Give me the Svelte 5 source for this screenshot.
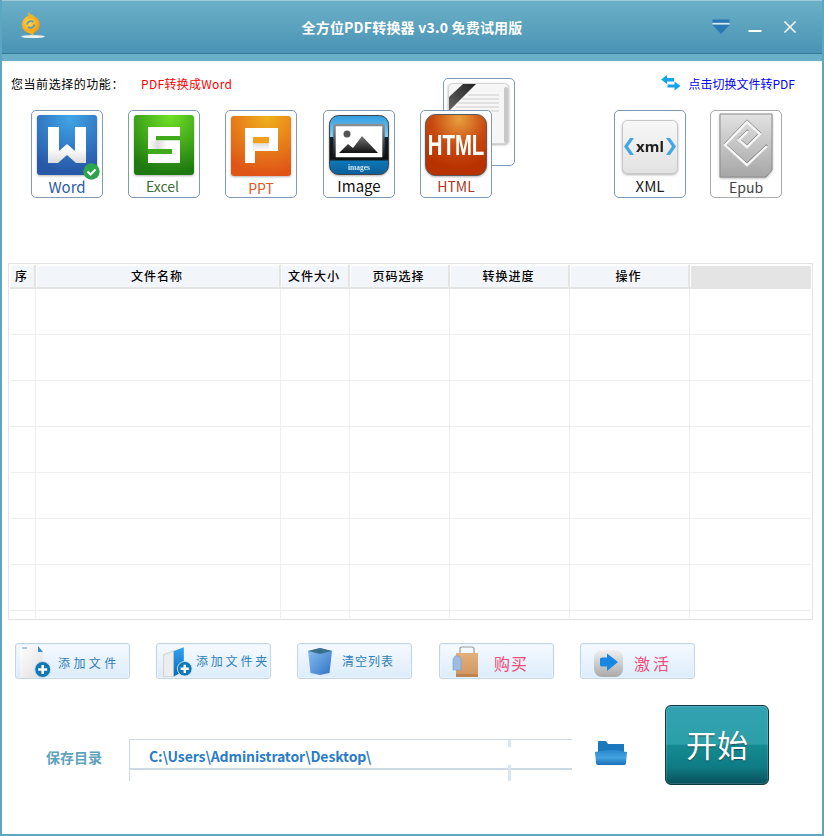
<script lang="ts">
	const columns = ['序', '文件名称', '文件大小', '页码选择', '转换进度', '操作', '']
	const rows = Array.from({ length: 8 })
</script>

<div class="window">
	<header class="titlebar">
		<svg class="logo" width="30" height="30" viewBox="0 0 30 30">
			<defs>
				<radialGradient id="logoFill" cx="0.4" cy="0.4" r="0.65">
					<stop offset="0" stop-color="#ffd84a" />
					<stop offset="1" stop-color="#f2960f" />
				</radialGradient>
			</defs>
			<ellipse cx="15" cy="25.6" rx="12" ry="1.5" fill="#e8f2f0" />
			<circle cx="12.8" cy="13.5" r="9" fill="url(#logoFill)" />
			<path d="M10 1.5 L16 5 L11 8z M15.5 25 L10 21 L15.5 18.5z" fill="#f6b21e" />
			<path d="M9 13.5 a4 4 0 0 1 6.5 -2.5 M16.5 13.5 a4 4 0 0 1 -6.5 2.5" fill="none" stroke="#5f9cb8" stroke-width="1.8" />
		</svg>
		<h1>全方位PDF转换器 v3.0 免费试用版</h1>
		<div class="controls">
			<svg class="skin" width="18" height="16" viewBox="0 0 18 16">
				<rect x="0.5" y="0.5" width="17" height="3" fill="#2b78b4" />
				<path d="M0.5 6 H17.5 L9 15z" fill="#2b78b4" />
				<rect x="0.5" y="4" width="17" height="1.4" fill="#d6ecf5" />
			</svg>
			<svg width="14" height="14" viewBox="0 0 14 14">
				<rect x="0.5" y="10" width="13" height="2" fill="#fff" />
			</svg>
			<svg width="14" height="14" viewBox="0 0 14 14">
				<path d="M1.5 1.5 L12.5 12.5 M12.5 1.5 L1.5 12.5" stroke="#fff" stroke-width="1.5" />
			</svg>
		</div>
	</header>
	<div class="band"></div>

	<main>
		<div class="status">
			<span class="status-label">您当前选择的功能：</span>
			<span class="status-value">PDF转换成Word</span>
			<span class="switch">
				<svg width="20" height="16" viewBox="0 0 20 16">
					<path d="M0 4.5 L6 0 V3 H13 V6.5 H6 V9z" fill="#12a5e8" />
					<path d="M19.5 11 L13.5 6.5 V9.5 H6.5 V12.5 H13.5 V15.5z" fill="#12a5e8" />
				</svg>
				<span>点击切换文件转PDF</span>
			</span>
		</div>

		<div class="tiles">
			<div class="tile">
				<svg width="60" height="60" viewBox="0 0 60 60">
					<defs>
						<radialGradient id="wordFill" cx="0.55" cy="0.05" r="0.9">
							<stop offset="0" stop-color="#3fa6e6" />
							<stop offset="1" stop-color="#2858a8" />
						</radialGradient>
						<linearGradient id="sheen" x1="0" y1="0" x2="0" y2="1">
							<stop offset="0" stop-color="#fff" />
							<stop offset="0.6" stop-color="#fff" />
							<stop offset="1" stop-color="#dcdcdc" />
						</linearGradient>
					</defs>
					<rect width="60" height="60" rx="3" fill="url(#wordFill)" />
					<path d="M11 12 H22 V36 L30 29 L38 36 V12 H49 V48 H39 L30 40 L21 48 H11z" fill="url(#sheen)" />
				</svg>
				<svg class="check" width="17" height="17" viewBox="0 0 17 17">
					<circle cx="8.5" cy="8.5" r="8.2" fill="#2da44e" />
					<path d="M4.5 8.5 L7.5 11.5 L12.5 6.5" fill="none" stroke="#fff" stroke-width="2" />
				</svg>
				<span class="word">Word</span>
			</div>

			<div class="tile">
				<svg width="60" height="60" viewBox="0 0 60 60">
					<defs>
						<radialGradient id="excelFill" cx="0.6" cy="0.02" r="0.95">
							<stop offset="0" stop-color="#6fe026" />
							<stop offset="1" stop-color="#1e7a10" />
						</radialGradient>
						<linearGradient id="excelMid" x1="0" y1="0" x2="1" y2="0">
							<stop offset="0" stop-color="#fff" />
							<stop offset="0.3" stop-color="#ddd" />
							<stop offset="0.6" stop-color="#fff" />
						</linearGradient>
					</defs>
					<rect width="60" height="60" rx="3" fill="url(#excelFill)" />
					<rect x="14" y="12" width="32" height="36" fill="#fff" />
					<rect x="22" y="21" width="24" height="4.5" fill="#3faa1c" />
					<rect x="14" y="34" width="24" height="5" fill="#3faa1c" />
					<rect x="14" y="25.5" width="32" height="8.5" fill="url(#excelMid)" />
				</svg>
				<span class="excel">Excel</span>
			</div>

			<div class="tile">
				<svg width="60" height="61" viewBox="0 0 60 61">
					<defs>
						<radialGradient id="pptFill" cx="0.6" cy="0.02" r="0.95">
							<stop offset="0" stop-color="#efb01e" />
							<stop offset="1" stop-color="#e05516" />
						</radialGradient>
						<linearGradient id="pptMid" x1="0" y1="0" x2="0" y2="1">
							<stop offset="0" stop-color="#ddd" />
							<stop offset="1" stop-color="#fff" />
						</linearGradient>
					</defs>
					<rect y="1" width="60" height="60" rx="3" fill="url(#pptFill)" />
					<path d="M14 13 H47 V36 H24 V48 H14z" fill="#fff" />
					<rect x="22" y="22" width="16" height="6.5" fill="#f0a01c" />
					<rect x="22" y="28.5" width="16" height="7.5" fill="url(#pptMid)" />
				</svg>
				<span class="ppt">PPT</span>
			</div>

			<div class="tile image-tile">
				<svg width="60" height="60" viewBox="0 0 60 60">
					<defs>
						<linearGradient id="imgFill" x1="0" y1="0" x2="0" y2="1">
							<stop offset="0" stop-color="#2f9ce0" />
							<stop offset="0.36" stop-color="#86cdf2" />
							<stop offset="0.37" stop-color="#123" />
							<stop offset="0.74" stop-color="#111" />
							<stop offset="0.78" stop-color="#0f76b4" />
							<stop offset="1" stop-color="#0a5f9a" />
						</linearGradient>
						<linearGradient id="imgFrame" x1="0" y1="0" x2="0" y2="1">
							<stop offset="0" stop-color="#8a8f94" />
							<stop offset="1" stop-color="#111" />
						</linearGradient>
						<linearGradient id="peak" x1="0" y1="0" x2="0" y2="1">
							<stop offset="0" stop-color="#777" />
							<stop offset="1" stop-color="#111" />
						</linearGradient>
					</defs>
					<rect x="0.5" y="0.5" width="59" height="59" rx="9" fill="url(#imgFill)" stroke="#444" />
					<rect x="5.5" y="10" width="49" height="33.5" rx="1.5" fill="#fff" stroke="url(#imgFrame)" stroke-width="2.4" />
					<circle cx="18" cy="19" r="3.5" fill="#555" />
					<path d="M10 38 L19 29 L24 33 L33 21 L49 38z" fill="url(#peak)" />
					<text x="30" y="55" text-anchor="middle" class="img-text">images</text>
				</svg>
				<span class="image">Image</span>
			</div>

			<div class="stack">
				<div class="tile doc-tile">
					<svg width="62" height="62" viewBox="0 0 62 62">
						<defs>
							<linearGradient id="ribbon" x1="0" y1="1" x2="1" y2="0">
								<stop offset="0" stop-color="#666" />
								<stop offset="1" stop-color="#222" />
							</linearGradient>
						</defs>
						<rect x="0.5" y="0.5" width="60" height="60" rx="4" fill="#f6f6f6" stroke="#d4d4d4" />
						<rect x="56" y="4" width="4" height="56" rx="2" fill="#c8c8c8" />
						<path d="M1 14 V28 L28 1 H15z" fill="url(#ribbon)" />
						<path d="M20 12 H51 M14 16 H51 M10 20 H51 M8 24 H51 M8 28 H51" stroke="#cccccc" />
					</svg>
				</div>
				<div class="tile html-tile">
					<svg width="62" height="63" viewBox="0 0 62 63">
						<defs>
							<radialGradient id="htmlFill" cx="0.55" cy="0.08" r="0.8">
								<stop offset="0" stop-color="#e8a040" />
								<stop offset="0.55" stop-color="#c84a10" />
								<stop offset="1" stop-color="#b83200" />
							</radialGradient>
						</defs>
						<rect x="0.5" y="0.5" width="61" height="61" rx="10" fill="url(#htmlFill)" stroke="#5a5a5a" />
						<text transform="translate(31 41) scale(0.68 1)" text-anchor="middle" class="html-text">HTML</text>
					</svg>
					<span class="html">HTML</span>
				</div>
			</div>

			<div class="tiles-right">
				<div class="tile">
					<svg width="60" height="60" viewBox="0 0 60 60">
						<defs>
							<linearGradient id="xmlFill" x1="0" y1="0" x2="0" y2="1">
								<stop offset="0" stop-color="#f8f8f8" />
								<stop offset="1" stop-color="#e2e2e2" />
							</linearGradient>
						</defs>
						<rect x="2.5" y="5.5" width="55" height="53" rx="5" fill="url(#xmlFill)" stroke="#c8c8c8" />
						<path d="M10 23 L4 31.5 L10 40 H14 L8 31.5 L14 23z M50 23 L56 31.5 L50 40 H46 L52 31.5 L46 23z" fill="#44a8e4" />
						<text x="30" y="36.5" text-anchor="middle" class="xml-text">xml</text>
					</svg>
					<span class="xml">XML</span>
				</div>
				<div class="tile epub-tile">
					<svg width="54" height="65" viewBox="0 0 54 65">
						<defs>
							<linearGradient id="epubFill" x1="0" y1="0" x2="0" y2="1">
								<stop offset="0" stop-color="#e2e2e2" />
								<stop offset="1" stop-color="#a6a6a6" />
							</linearGradient>
						</defs>
						<path d="M1 1 H53 V57 L47 64 H1z" fill="url(#epubFill)" stroke="#8c8c8c" />
						<path d="M48 32 L28 51 L6 31 L28 8 L41 20 L28 33 L20 26 L29 17" fill="none" stroke="#777" stroke-width="2" />
						<path d="M48 33 L28 52 L6 32 L28 9 L41 21 L28 34 L20 27 L29 18" fill="none" stroke="#f6f6f6" stroke-width="2.4" />
					</svg>
					<span class="epub">Epub</span>
				</div>
			</div>
		</div>

		<section class="table">
			<div class="thead">
				{#each columns as col}
					<div class="th" class:blank={col === ''}>{col}</div>
				{/each}
			</div>
			<div class="tbody">
				{#each rows as _}
					<div class="tr">
						{#each columns as _col}
							<div class="td"></div>
						{/each}
					</div>
				{/each}
			</div>
		</section>

		<div class="actions">
			<button class="action add-file">
				<svg width="36" height="34" viewBox="0 0 36 34">
					<defs>
						<linearGradient id="pageFill" x1="0" y1="0" x2="1" y2="1">
							<stop offset="0" stop-color="#fff" />
							<stop offset="1" stop-color="#dedede" />
						</linearGradient>
					</defs>
					<path d="M1 2 H19 L24 8 V34 H1z" fill="url(#pageFill)" />
					<path d="M19 2 L24 8 H19z" fill="#3a8ccc" />
					<path d="M3 4 H8" stroke="#8ab4d8" stroke-width="1.4" />
					<circle cx="23.7" cy="25.5" r="8" fill="#1278b4" stroke="#d2e4ee" />
					<path d="M23.7 21 V30 M19.2 25.5 H28.2" stroke="#fff" stroke-width="2.6" />
				</svg>
				<span>添加文件</span>
			</button>
			<button class="action add-folder">
				<svg width="36" height="34" viewBox="0 0 36 34">
					<defs>
						<linearGradient id="leafFill" x1="0" y1="0" x2="0" y2="1">
							<stop offset="0" stop-color="#30a4ee" />
							<stop offset="1" stop-color="#1068b8" />
						</linearGradient>
					</defs>
					<path d="M4 10 L15 6 V34 H4z" fill="#ededed" stroke="#cfcfcf" />
					<path d="M15 6 L26 2 V28 L15 34z" fill="url(#leafFill)" />
					<circle cx="27" cy="25.5" r="8" fill="#1278b4" stroke="#d2e4ee" />
					<path d="M27 21 V30 M22.5 25.5 H31.5" stroke="#fff" stroke-width="2.6" />
				</svg>
				<span>添加文件夹</span>
			</button>
			<button class="action clear">
				<svg width="28" height="30" viewBox="0 0 28 30">
					<defs>
						<linearGradient id="binFill" x1="0" y1="0" x2="1" y2="1">
							<stop offset="0" stop-color="#8cc2f2" />
							<stop offset="1" stop-color="#2f72c8" />
						</linearGradient>
					</defs>
					<path d="M1 5 L13 2 L25 5 L22.5 27 L13 29 L3.5 27z" fill="url(#binFill)" />
					<path d="M1 5 L13 2 L25 5 L13 8z" fill="#3a6f8c" />
				</svg>
				<span>清空列表</span>
			</button>
			<button class="action buy">
				<svg width="28" height="32" viewBox="0 0 28 32">
					<defs>
						<linearGradient id="bagFill" x1="0" y1="0" x2="0" y2="1">
							<stop offset="0" stop-color="#e2b07c" />
							<stop offset="1" stop-color="#cf9660" />
						</linearGradient>
					</defs>
					<path d="M8 9 V4 Q8 2 10 2 H20 Q22 2 22 4 V9" fill="none" stroke="#9a9a9a" stroke-width="1.2" />
					<rect x="4" y="8" width="22" height="24" fill="url(#bagFill)" />
					<rect x="4" y="29" width="22" height="3" fill="#bb8450" />
					<path d="M3 11 H7 L9 14 V25 H1 V14z" fill="#9cbce6" stroke="#7a9cd0" stroke-width="0.6" />
				</svg>
				<span>购买</span>
			</button>
			<button class="action activate">
				<svg width="32" height="32" viewBox="0 0 32 32">
					<defs>
						<linearGradient id="chipFill" x1="0" y1="0" x2="0" y2="1">
							<stop offset="0" stop-color="#f0f0f0" />
							<stop offset="1" stop-color="#a8aaa8" />
						</linearGradient>
					</defs>
					<rect x="1" y="5" width="29" height="27" rx="8" fill="url(#chipFill)" />
					<path d="M7 14 Q7 12.5 9 12.5 H14 V8.5 L25 17 L14 26 V21.5 H9 Q7 21.5 7 20z" fill="#1a86e4" />
				</svg>
				<span>激活</span>
			</button>
		</div>

		<div class="save">
			<span class="save-label">保存目录</span>
			<div class="path">
				<div class="path-text">C:\Users\Administrator\Desktop\</div>
				<i class="tick upper"></i>
				<i class="tick lower"></i>
			</div>
			<svg class="folder" width="32" height="24" viewBox="0 0 32 24">
				<defs>
					<linearGradient id="folderFill" x1="0" y1="0" x2="0" y2="1">
						<stop offset="0" stop-color="#2a88cc" />
						<stop offset="0.5" stop-color="#42a2e0" />
						<stop offset="1" stop-color="#1a70b8" />
					</linearGradient>
				</defs>
				<path d="M3 1 Q3 0 4 0 H11 L13 3 H29 V12 H3z" fill="#1c78bc" />
				<path d="M0 11 Q10 9 16 9 Q22 9 32 11 L31 22 Q31 24 29 24 H3 Q1 24 1 22z" fill="url(#folderFill)" />
			</svg>
			<button class="start">开始</button>
		</div>
	</main>
</div>

<style>
	:global(body) {
		margin: 0;
		background: #fff;
	}

	.window {
		box-sizing: border-box;
		width: 824px;
		height: 836px;
		border: 2px solid #5ba6c1;
		border-top: 0;
		display: flex;
		flex-direction: column;
		font-family: "Noto Sans CJK SC", "Noto Sans", sans-serif;
		font-size: 12px;
		color: #000;
		overflow: hidden;
	}

	.titlebar {
		height: 54px;
		display: flex;
		align-items: center;
		background: linear-gradient(#6bb0c8, #4a93b4);
		border-top: 1px solid #9cc9d8;
		border-bottom: 1px solid #35799a;
		box-sizing: border-box;
		position: relative;
		margin: 0 -2px;
		flex: none;
	}

	.logo {
		margin-left: 18px;
		margin-top: -2px;
	}

	h1 {
		position: absolute;
		left: 0;
		right: 0;
		top: -1px;
		margin: 0;
		text-align: center;
		color: #fff;
		font-size: 14px;
		font-weight: 700;
		line-height: 54px;
		letter-spacing: 0.2px;
	}

	.controls {
		margin-left: auto;
		margin-right: 27px;
		display: flex;
		align-items: center;
		gap: 21px;
		margin-top: -1px;
		position: relative;
	}

	.skin {
		margin-right: -3px;
	}

	.band {
		height: 7px;
		flex: none;
		background: #69afc8;
		margin: 0 -2px;
	}

	main {
		flex: 1;
		display: flex;
		flex-direction: column;
	}

	.status {
		display: flex;
		align-items: center;
		height: 16px;
		margin-top: 14px;
		padding-left: 9px;
	}

	.status-label {
		width: 130px;
		letter-spacing: 0.55px;
	}

	.status-value {
		color: #f00;
		letter-spacing: 0.3px;
	}

	.switch {
		margin-left: auto;
		margin-right: 27px;
		display: flex;
		align-items: center;
		gap: 8px;
		color: #0000ff;
	}

	.tiles {
		display: flex;
		gap: 25px;
		margin-top: 19px;
		padding-left: 29px;
		padding-right: 40px;
	}

	.tile {
		box-sizing: border-box;
		position: relative;
		width: 72px;
		height: 88px;
		border: 1px solid #8099b4;
		border-radius: 5px;
		background: #fff;
		display: flex;
		flex-direction: column;
		align-items: center;
		padding-top: 4px;
		font-size: 14px;
		line-height: 17px;
	}

	.tile > svg:not(.check) {
		flex: none;
		filter: drop-shadow(0 1px 1px rgba(0, 0, 0, 0.3));
	}

	.tile > span {
		margin-top: 3px;
	}

	.image-tile {
		margin-left: 1px;
	}

	.check {
		position: absolute;
		left: 51px;
		top: 52px;
	}

	.word { color: #2d5ca8; font-size: 15px; }
	.excel { color: #3f6e3a; margin-right: 3px; }
	.ppt { color: #e2561f; }
	.image { color: #111; font-size: 15px; }
	.html { color: #a93a22; }
	.xml { color: #222; font-size: 15px; }
	.epub { color: #444; }

	.tile > .ppt {
		margin-top: 4px;
	}

	.tile > .image {
		margin-top: 2px;
	}

	.tile > .html {
		margin-top: 1px;
	}

	.tile > .xml {
		margin-top: 2px;
	}

	.img-text {
		font: 700 7.5px "Liberation Serif", serif;
		fill: #cfe6f4;
	}

	.html-text {
		font: 700 30px "Liberation Sans", sans-serif;
		fill: #fff;
	}

	.xml-text {
		font: 700 15px "Noto Sans", sans-serif;
		fill: #222;
	}

	.stack {
		position: relative;
		width: 72px;
		height: 88px;
	}

	.doc-tile {
		position: absolute;
		left: 23px;
		top: -32px;
	}

	.html-tile {
		position: absolute;
		left: 0;
		top: 0;
		padding-top: 3px;
	}

	.tiles-right {
		margin-left: auto;
		display: flex;
		gap: 24px;
	}

	.epub-tile {
		border-color: #aaa;
		padding-top: 2px;
	}

	.epub-tile > span {
		margin-top: 1px;
	}

	.table {
		box-sizing: border-box;
		width: 805px;
		height: 357px;
		margin: 65px 0 0 6px;
		border: 1px solid #e4e4e4;
		padding: 1px;
		display: flex;
		flex-direction: column;
	}

	.thead,
	.tr {
		display: grid;
		grid-template-columns: 26px 245px 69px 100px 120px 120px 1fr;
	}

	.thead {
		height: 24px;
		flex: none;
	}

	.th {
		box-sizing: border-box;
		background: #f2f5fa;
		border-right: 2px solid #e4e4e4;
		border-bottom: 2px solid #e4e4e4;
		box-shadow: inset 1px 1px 0 #fff;
		text-align: center;
		line-height: 22px;
		letter-spacing: 1px;
		font-weight: 500;
		padding-right: 1px;
	}

	.th:last-child {
		border-right: 0;
	}

	.th.blank {
		background: #e4e4e4;
	}

	.tbody {
		flex: 1;
		overflow: hidden;
	}

	.tr {
		height: 46px;
		box-sizing: border-box;
		border-bottom: 1px solid #efefef;
	}

	.td {
		border-right: 1px solid #efefef;
	}

	.td:last-child {
		border-right: 0;
	}

	.actions {
		display: flex;
		gap: 26px;
		margin: 23px 0 0 13px;
	}

	.action {
		box-sizing: border-box;
		flex: none;
		width: 115px;
		height: 36px;
		padding: 0 0 0 3px;
		border: 1px solid #c2d6e6;
		border-radius: 3px;
		background: linear-gradient(#f6faff, #dcecfb);
		box-shadow: inset 0 0 0 1px #eaf3fb;
		display: flex;
		align-items: center;
		font-family: inherit;
		color: #2f7fb8;
		font-size: 12px;
		white-space: nowrap;
	}

	.add-file span {
		margin: 2px 0 0 3px;
		letter-spacing: 3.4px;
	}

	.add-folder span {
		margin: 0 0 2px 3px;
		letter-spacing: 2.8px;
	}

	.clear {
		padding-left: 9px;
	}

	.clear span {
		margin: 0 0 2px 7px;
		letter-spacing: 1px;
	}

	.buy span,
	.activate span {
		font-size: 16px;
		color: #ee4c78;
		margin-top: 4px;
	}

	.buy {
		margin-left: 1px;
		padding-left: 12px;
	}

	.buy span {
		margin-left: 14px;
		letter-spacing: 1px;
	}

	.activate {
		padding-left: 12px;
	}

	.activate span {
		margin-left: 9px;
		letter-spacing: 3px;
	}

	.save {
		display: flex;
		align-items: flex-start;
		margin-top: 26px;
		padding-left: 44px;
	}

	.save-label {
		width: 83px;
		margin-top: 42px;
		line-height: 20px;
		font-size: 14px;
		font-weight: 700;
		color: #5fa3bb;
	}

	.path {
		box-sizing: border-box;
		position: relative;
		width: 443px;
		height: 42px;
		margin-top: 34px;
		border-left: 1px solid #ccd9e5;
	}

	.path-text {
		box-sizing: border-box;
		height: 31px;
		border-top: 1px solid #ccd9e5;
		border-bottom: 2px solid #ccd9e5;
		padding-left: 19px;
		line-height: 33px;
		font-size: 14px;
		font-weight: 700;
		color: #2a7cc8;
		letter-spacing: -0.1px;
	}

	.tick {
		position: absolute;
		left: 378px;
		width: 3px;
		background: #dbe5ee;
	}

	.tick.upper {
		top: 1px;
		height: 7px;
	}

	.tick.lower {
		top: 26px;
		height: 16px;
	}

	.folder {
		margin: 36px 0 0 23px;
	}

	.start {
		box-sizing: border-box;
		width: 104px;
		height: 80px;
		margin-left: 38px;
		border: 1px solid #0b3a44;
		border-radius: 6px;
		padding: 0 0 4px;
		background: linear-gradient(#33a2b2 0%, #2ba0a8 49%, #158a92 50%, #0f7c84 78%, #07505c 100%);
		box-shadow: inset 0 0 0 1px rgba(255, 255, 255, 0.15);
		color: #fff;
		font-family: inherit;
		font-size: 31px;
		line-height: 1;
		text-shadow: 0 1px 1px #1a4a50;
	}
</style>
